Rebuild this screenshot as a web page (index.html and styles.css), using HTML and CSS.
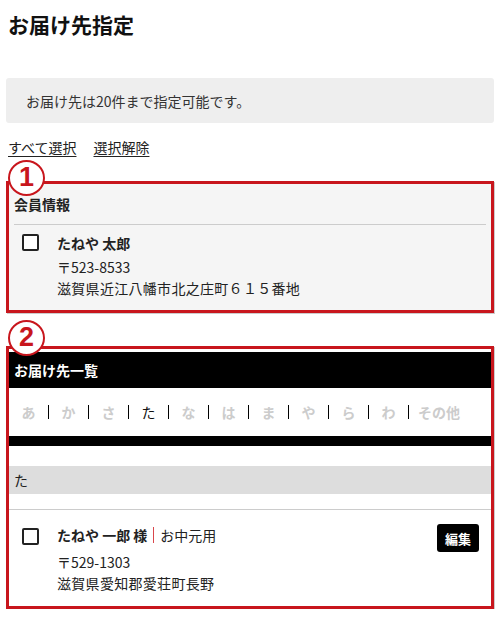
FILE: index.html
```html
<!DOCTYPE html>
<html lang="ja">
<head>
<meta charset="utf-8">
<title>お届け先指定</title>
<link rel="stylesheet" href="styles.css">
</head>
<body>
<div class="page">
  <h1 class="title">お届け先指定</h1>
  <div class="notice">お届け先は20件まで指定可能です。</div>
  <div class="links">
    <a href="#" class="link">すべて選択</a>
    <a href="#" class="link">選択解除</a>
  </div>

  <section class="frame frame-member">
    <span class="marker marker-1">1</span>
    <div class="member-head">会員情報</div>
    <div class="entry entry-member">
      <span class="check"></span>
      <div class="entry-body">
        <div class="name">たねや 太郎</div>
        <div class="zip">〒523-8533</div>
        <div class="addr">滋賀県近江八幡市北之庄町６１５番地</div>
      </div>
    </div>
  </section>

  <section class="frame frame-list">
    <span class="marker marker-2">2</span>
    <div class="list-head">お届け先一覧</div>
    <ul class="kana">
      <li class="kana-item">あ</li>
      <li class="kana-item">か</li>
      <li class="kana-item">さ</li>
      <li class="kana-item is-active">た</li>
      <li class="kana-item">な</li>
      <li class="kana-item">は</li>
      <li class="kana-item">ま</li>
      <li class="kana-item">や</li>
      <li class="kana-item">ら</li>
      <li class="kana-item">わ</li>
      <li class="kana-item kana-other">その他</li>
    </ul>
    <div class="kana-bar"></div>
    <div class="group-label">た</div>
    <div class="entry entry-addr">
      <span class="check"></span>
      <div class="entry-body">
        <div class="name">たねや 一郎 様<span class="sep"></span><span class="tag">お中元用</span></div>
        <div class="zip">〒529-1303</div>
        <div class="addr">滋賀県愛知郡愛荘町長野</div>
      </div>
      <button class="edit">編集</button>
    </div>
  </section>
</div>
</body>
</html>
```

FILE: styles.css
```css
* { box-sizing: border-box; }
body {
  margin: 0;
  font-family: "Noto Sans CJK JP", "Noto Sans", sans-serif;
  font-size: 14px;
  color: #222;
  background: #fff;
}
.page { padding: 0 6px; }
.title {
  margin: 0;
  padding: 10px 0 0 2px;
  font-size: 21px;
  line-height: 28px;
  font-weight: bold;
  color: #111;
}
.notice {
  margin-top: 40px;
  height: 45px;
  padding: 0 20px;
  display: flex;
  align-items: center;
  background: #eeeeee;
  border-radius: 3px;
  color: #333;
  font-size: 14px;
}
.links {
  margin-top: 14px;
  line-height: 20px;
  padding-left: 2px;
  display: flex;
  gap: 17px;
}
.link { color: #222; text-decoration: underline; text-underline-offset: 3px; }

.frame {
  position: relative;
  border: 3px solid #c8161d;
  box-shadow: 1px 1px 0 #ccc;
}
.frame-member {
  margin-top: 24px;
  background: #f5f5f5;
  padding: 0 5px;
}
.frame-list {
  margin-top: 33px;
  background: #fff;
  padding-top: 3px;
}
.marker {
  position: absolute;
  left: -1px;
  width: 37px;
  height: 36px;
  border: 2.5px solid #c8161d;
  border-radius: 50%;
  background: #fff;
  color: #c8161d;
  font-family: "Liberation Sans", "DejaVu Sans", sans-serif;
  font-weight: bold;
  font-size: 27px;
  line-height: 31px;
  text-align: center;
}
.marker-1 { top: -24px; }
.marker-2 { top: -29px; }

.member-head {
  height: 41px;
  padding-top: 10px;
  font-weight: bold;
  line-height: 20px;
  border-bottom: 1px solid #ccc;
  position: relative;
  z-index: 1;
}

.entry { display: flex; align-items: flex-start; }
.entry-member { padding: 6px 0 12px 8px; }
.check {
  flex: none;
  width: 17px;
  height: 17px;
  border: 2px solid #222;
  border-radius: 2px;
  background: #fff;
  margin-top: 3px;
}
.entry-body { margin-left: 18px; flex: 1; }
.name { font-weight: bold; line-height: 24px; display: flex; align-items: center; }
.zip { line-height: 22px; margin-top: 1px; }
.addr { line-height: 20px; letter-spacing: 0.3px; }
.sep {
  display: inline-block;
  width: 1px;
  height: 16px;
  background: #d9464c;
  margin: 0 6px 0 6px;
}
.tag { font-weight: normal; }

.list-head {
  height: 36px;
  background: #000;
  color: #fff;
  font-weight: bold;
  line-height: 36px;
  padding-left: 5px;
}
.kana {
  list-style: none;
  margin: 0;
  padding: 0;
  height: 48px;
  display: flex;
  align-items: center;
}
.kana-item {
  width: 40px;
  text-align: center;
  font-weight: bold;
  color: #ccc;
  line-height: 14px;
  border-right: 1px solid #000;
}
.kana-item.is-active { color: #111; font-weight: normal; }
.kana-other { border-right: none; width: auto; padding-left: 9px; }
.kana-bar { height: 10px; background: #000; }
.group-label {
  margin-top: 20px;
  height: 28px;
  background: #ddd;
  line-height: 28px;
  padding-left: 5px;
}
.entry-addr {
  margin-top: 15px;
  border-top: 1px solid #ccc;
  padding: 13px 12px 13px 13px;
}
.entry-addr .check { margin-top: 5px; }
.entry-addr .zip { margin-top: 4px; }
.edit {
  flex: none;
  width: 42px;
  height: 28px;
  margin-top: 1px;
  border: none;
  border-radius: 3px;
  background: #000;
  color: #fff;
  font-family: inherit;
  font-weight: bold;
  font-size: 13px;
  padding: 0;
}
```
